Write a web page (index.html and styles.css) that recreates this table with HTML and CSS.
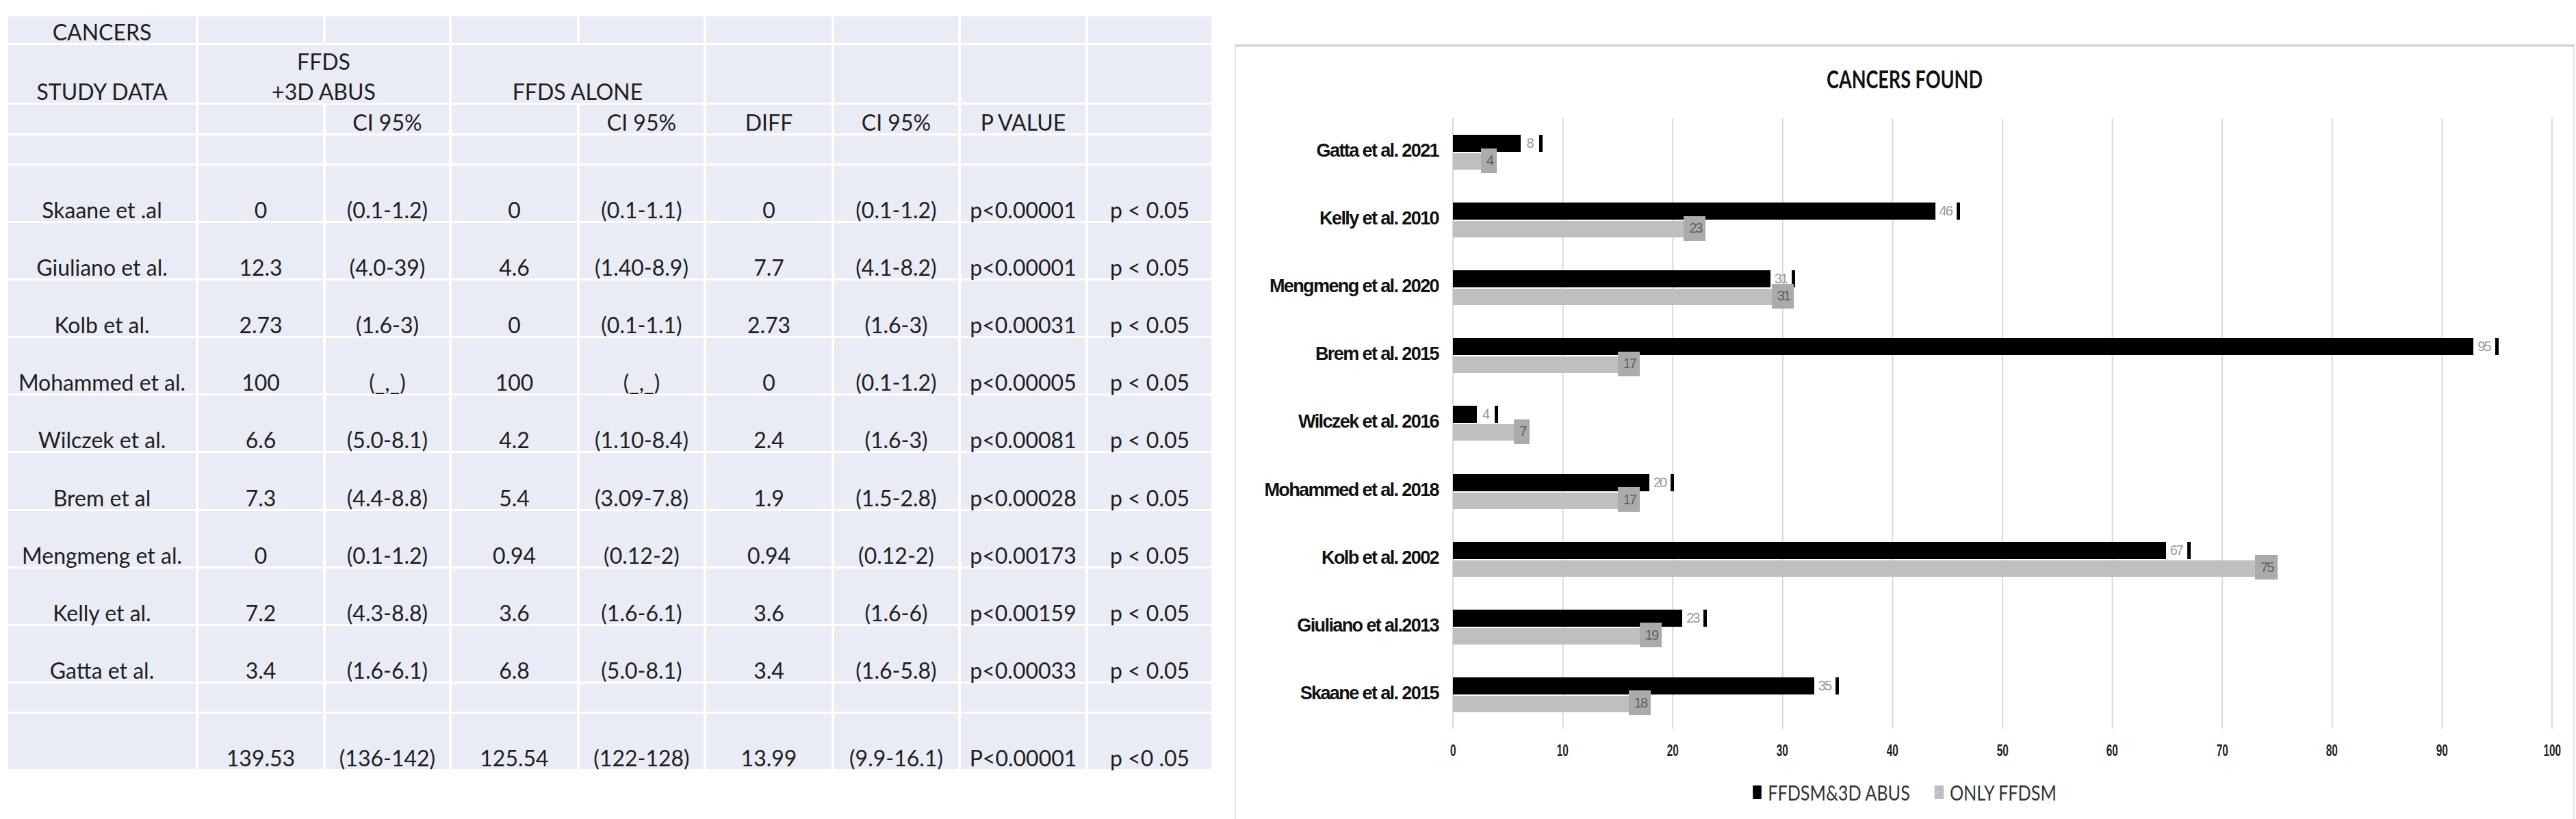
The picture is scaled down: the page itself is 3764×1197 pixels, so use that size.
FILE: index.html
```html
<!DOCTYPE html>
<html>
<head>
<meta charset="utf-8">
<link rel="stylesheet" href="styles.css">
</head>
<body>
<div class="page">
  <table class="data-table">
    <colgroup>
      <col class="c0"><col class="c1"><col class="c2"><col class="c3"><col class="c4"><col class="c5"><col class="c6"><col class="c7"><col class="c8">
    </colgroup>
    <tr class="r-title"><td>CANCERS</td><td></td><td></td><td></td><td></td><td></td><td></td><td></td><td></td></tr>
    <tr class="r-head"><td>STUDY DATA</td><td colspan="2"><span class="l1">FFDS</span>+3D ABUS</td><td colspan="2">FFDS ALONE</td><td></td><td></td><td></td><td></td></tr>
    <tr class="r-sub"><td></td><td></td><td>CI 95%</td><td></td><td>CI 95%</td><td>DIFF</td><td>CI 95%</td><td>P VALUE</td><td></td></tr>
    <tr class="r-gap"><td></td><td></td><td></td><td></td><td></td><td></td><td></td><td></td><td></td></tr>
    <tr class="r-data"><td>Skaane et .al</td><td>0</td><td>(0.1-1.2)</td><td>0</td><td>(0.1-1.1)</td><td>0</td><td>(0.1-1.2)</td><td>p&lt;0.00001</td><td>p &lt; 0.05</td></tr>
    <tr class="r-data"><td>Giuliano et al.</td><td>12.3</td><td>(4.0-39)</td><td>4.6</td><td>(1.40-8.9)</td><td>7.7</td><td>(4.1-8.2)</td><td>p&lt;0.00001</td><td>p &lt; 0.05</td></tr>
    <tr class="r-data"><td>Kolb et al.</td><td>2.73</td><td>(1.6-3)</td><td>0</td><td>(0.1-1.1)</td><td>2.73</td><td>(1.6-3)</td><td>p&lt;0.00031</td><td>p &lt; 0.05</td></tr>
    <tr class="r-data"><td>Mohammed et al.</td><td>100</td><td>(_,_)</td><td>100</td><td>(_,_)</td><td>0</td><td>(0.1-1.2)</td><td>p&lt;0.00005</td><td>p &lt; 0.05</td></tr>
    <tr class="r-data"><td>Wilczek et al.</td><td>6.6</td><td>(5.0-8.1)</td><td>4.2</td><td>(1.10-8.4)</td><td>2.4</td><td>(1.6-3)</td><td>p&lt;0.00081</td><td>p &lt; 0.05</td></tr>
    <tr class="r-data"><td>Brem et al</td><td>7.3</td><td>(4.4-8.8)</td><td>5.4</td><td>(3.09-7.8)</td><td>1.9</td><td>(1.5-2.8)</td><td>p&lt;0.00028</td><td>p &lt; 0.05</td></tr>
    <tr class="r-data"><td>Mengmeng et al.</td><td>0</td><td>(0.1-1.2)</td><td>0.94</td><td>(0.12-2)</td><td>0.94</td><td>(0.12-2)</td><td>p&lt;0.00173</td><td>p &lt; 0.05</td></tr>
    <tr class="r-data"><td>Kelly et al.</td><td>7.2</td><td>(4.3-8.8)</td><td>3.6</td><td>(1.6-6.1)</td><td>3.6</td><td>(1.6-6)</td><td>p&lt;0.00159</td><td>p &lt; 0.05</td></tr>
    <tr class="r-data"><td>Gatta et al.</td><td>3.4</td><td>(1.6-6.1)</td><td>6.8</td><td>(5.0-8.1)</td><td>3.4</td><td>(1.6-5.8)</td><td>p&lt;0.00033</td><td>p &lt; 0.05</td></tr>
    <tr class="r-gap"><td></td><td></td><td></td><td></td><td></td><td></td><td></td><td></td><td></td></tr>
    <tr class="r-data"><td></td><td>139.53</td><td>(136-142)</td><td>125.54</td><td>(122-128)</td><td>13.99</td><td>(9.9-16.1)</td><td>P&lt;0.00001</td><td>p &lt;0 .05</td></tr>
  </table>

  <section class="chart">
    <div class="chart-title">CANCERS FOUND</div>
    <div class="plot">
      <div class="cat">Gatta et al. 2021</div>
      <div class="bars">
        <div class="bar-b" style="width:130.5px"><span class="fill"></span><span class="val one">8</span><span class="tick"></span></div>
        <div class="bar-g" style="width:64.2px"><span class="box">4</span></div>
      </div>
      <div class="cat">Kelly et al. 2010</div>
      <div class="bars">
        <div class="bar-b" style="width:740.8px"><span class="fill"></span><span class="val">46</span><span class="tick"></span></div>
        <div class="bar-g" style="width:369.4px"><span class="box">23</span></div>
      </div>
      <div class="cat">Mengmeng et al. 2020</div>
      <div class="bars">
        <div class="bar-b" style="width:499.9px"><span class="fill"></span><span class="val">31</span><span class="tick"></span></div>
        <div class="bar-g" style="width:497.9px"><span class="box">31</span></div>
      </div>
      <div class="cat">Brem et al. 2015</div>
      <div class="bars">
        <div class="bar-b" style="width:1527.7px"><span class="fill"></span><span class="val">95</span><span class="tick"></span></div>
        <div class="bar-g" style="width:273px"><span class="box">17</span></div>
      </div>
      <div class="cat">Wilczek et al. 2016</div>
      <div class="bars">
        <div class="bar-b" style="width:66.2px"><span class="fill"></span><span class="val one">4</span><span class="tick"></span></div>
        <div class="bar-g" style="width:112.4px"><span class="box">7</span></div>
      </div>
      <div class="cat">Mohammed et al. 2018</div>
      <div class="bars">
        <div class="bar-b" style="width:323.2px"><span class="fill"></span><span class="val">20</span><span class="tick"></span></div>
        <div class="bar-g" style="width:273px"><span class="box">17</span></div>
      </div>
      <div class="cat">Kolb et al. 2002</div>
      <div class="bars">
        <div class="bar-b" style="width:1078px"><span class="fill"></span><span class="val">67</span><span class="tick"></span></div>
        <div class="bar-g" style="width:1204.5px"><span class="box">75</span></div>
      </div>
      <div class="cat">Giuliano et al.2013</div>
      <div class="bars">
        <div class="bar-b" style="width:371.4px"><span class="fill"></span><span class="val">23</span><span class="tick"></span></div>
        <div class="bar-g" style="width:305.1px"><span class="box">19</span></div>
      </div>
      <div class="cat">Skaane et al. 2015</div>
      <div class="bars">
        <div class="bar-b" style="width:564.1px"><span class="fill"></span><span class="val">35</span><span class="tick"></span></div>
        <div class="bar-g" style="width:289.1px"><span class="box">18</span></div>
      </div>
    </div>
    <div class="axis">
      <span>0</span><span>10</span><span>20</span><span>30</span><span>40</span><span>50</span><span>60</span><span>70</span><span>80</span><span>90</span><span>100</span>
    </div>
    <div class="legend">
      <span class="key key-b"></span><span class="key-text">FFDSM&amp;3D ABUS</span>
      <span class="key key-g"></span><span class="key-text">ONLY FFDSM</span>
    </div>
  </section>
</div>
</body>
</html>
```

FILE: styles.css
```css
html, body {
  margin: 0;
  padding: 0;
  background: #ffffff;
  overflow: hidden;
}

body {
  width: 3764px;
  height: 1197px;
}

.page {
  display: flex;
  align-items: flex-start;
}

/* ---------- table ---------- */
.data-table {
  margin: 21px 0 0 8px;
  border-collapse: collapse;
  table-layout: fixed;
  width: 1762px;
  font-family: "Lato", "Liberation Sans", sans-serif;
  font-size: 32px;
  color: #1f1f1f;
}

.c0 { width: 278px; }
.c1 { width: 186px; }
.c2 { width: 184px; }
.c3 { width: 187px; }
.c4 { width: 185px; }
.c5 { width: 187px; }
.c6 { width: 185px; }
.c7 { width: 186px; }
.c8 { width: 184px; }

.data-table td {
  background: #e9ebf5;
  border-style: solid;
  border-color: #ffffff;
  border-width: 3px 4px;
  padding: 0;
  text-align: center;
  vertical-align: bottom;
  line-height: 32px;
  white-space: nowrap;
}

.r-title { height: 42px; }
.r-head { height: 87px; }
.r-sub { height: 45px; }
.r-gap { height: 44px; }
.r-data { height: 84.1px; }

.l1 {
  display: block;
  margin-bottom: 12px;
}

/* ---------- chart ---------- */
.chart {
  margin: 65px 0 0 30px;
  width: 1958px;
  height: 1140px;
  box-sizing: border-box;
  border-top: 3px solid #cfcfcf;
  border-left: 2px solid #e6e6e6;
  border-right: 2px solid #e6e6e6;
  display: flex;
  flex-direction: column;
  font-family: "Liberation Sans", Arial, sans-serif;
}

.chart-title {
  margin-top: 25px;
  font-family: "Lato", sans-serif;
  font-weight: 700;
  font-size: 37px;
  line-height: 44px;
  text-align: center;
  color: #111111;
  transform: scaleX(0.73);
}

.plot {
  margin-top: 36px;
  display: grid;
  grid-template-columns: 316px 1608px;
  grid-auto-rows: 99.11px;
}

.cat {
  display: flex;
  align-items: center;
  justify-content: flex-end;
  padding: 0 20px 4px 0;
  font-size: 27px;
  font-weight: 700;
  letter-spacing: -1.6px;
  line-height: 1;
  color: #111111;
  white-space: nowrap;
}

.bars {
  display: flex;
  flex-direction: column;
  justify-content: center;
  gap: 2px;
  padding-left: 1px;
  background-image: linear-gradient(to right, #d9d9d9 0, #d9d9d9 2px, transparent 2px);
  background-size: 160.6px 100%;
  background-repeat: repeat-x;
}

.bar-b {
  display: flex;
  height: 25px;
}

.fill {
  flex: 1;
  background: #000000;
}

.val {
  display: flex;
  align-items: center;
  padding: 0 7px 0 6px;
  font-size: 20px;
  letter-spacing: -2px;
  color: #9a9a9a;
}

.val.one {
  padding: 0 9px 0 8px;
}

.tick {
  width: 5px;
  background: #000000;
}

.bar-g {
  display: flex;
  justify-content: flex-end;
  align-items: center;
  height: 24px;
  background: #bfbfbf;
}

.box {
  display: flex;
  align-items: center;
  justify-content: center;
  height: 36px;
  margin-top: -3px;
  padding: 0 6px 0 8px;
  background: #ababab;
  color: #5e5e5e;
  font-size: 20px;
  letter-spacing: -2px;
}

.axis {
  margin: 18px 0 0 236.7px;
  display: grid;
  grid-template-columns: repeat(11, 160.6px);
  font-size: 24px;
  font-weight: 700;
  line-height: 28px;
  color: #1f1f1f;
}

.axis span {
  display: block;
  text-align: center;
  transform: scaleX(0.64);
}

.legend {
  margin-top: 29px;
  display: flex;
  justify-content: center;
  align-items: center;
  font-family: "Lato", sans-serif;
  font-size: 30px;
  line-height: 36px;
  color: #333333;
  transform: scaleX(0.84);
}

.key {
  width: 15.5px;
  height: 20px;
  margin-right: 10.7px;
}

.key-b { background: #000000; }
.key-g { background: #bfbfbf; margin-left: 43px; }

.key-text {
  white-space: nowrap;
}
```
